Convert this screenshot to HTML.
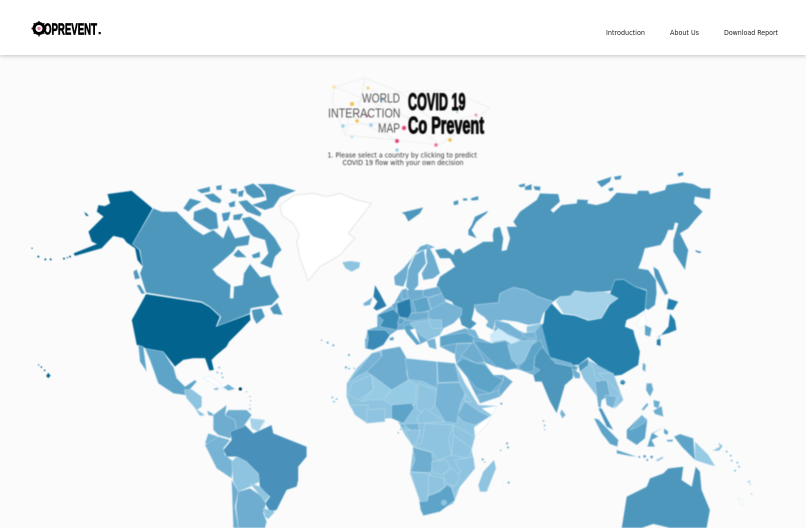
<!DOCTYPE html>
<html><head><meta charset="utf-8"><title>CoPrevent</title>
<style>
html,body{margin:0;padding:0;background:#fbfbfb}
body{width:806px;height:528px;overflow:hidden;position:relative;font-family:"DejaVu Sans",sans-serif}
.hd{position:absolute;left:0;top:0;width:806px;height:55px;background:#fff;box-shadow:0 1px 4px rgba(0,0,0,.22)}
svg{position:absolute;left:0;top:0}
.m polygon,.m path{stroke:#c9e2ef;stroke-linejoin:round}
.a{stroke-width:1.2}
</style></head><body>
<svg width="806" height="528" viewBox="0 0 806 528" style="filter:blur(.4px)">
<!-- Greenland -->
<g transform="translate(180 175) scale(.3333)"><polygon fill="#fff" stroke="#e4e6e7" stroke-width="3" stroke-linejoin="round" points="300,90 345,60 400,55 440,65 480,55 530,75 575,85 540,130 505,175 525,190 510,205 480,240 420,275 385,318 375,290 360,250 350,200 358,180 340,145 305,120"/>
<polygon fill="#8ec4e0" points="487,262 510,258 540,262 538,278 515,290 497,280"/></g>

<!-- North America -->
<g class="m a" transform="translate(20 170) scale(.3333)">
<g fill="#4d97bd" style="stroke:none">
<polygon fill="#4d97bd" points="400,115 425,125 470,125 520,175 550,195 580,180 610,205 625,165 645,205 690,195 685,225 650,230 640,245 600,280 578,298 590,315 632,345 630,385 640,385 642,350 668,345 672,310 690,282 722,322 750,315 755,340 778,380 755,405 720,410 692,415 690,430 590,470 603,440 570,410 545,395 378,368 360,310 368,290 360,240 337,222"/>
<polygon points="490,115 510,85 545,95 520,110 505,125"/>
<polygon points="522,125 560,112 590,130 595,175 570,180 545,165 520,150"/>
<polygon points="530,60 570,50 570,65 545,70"/>
<polygon points="552,75 580,70 605,90 600,100 575,95"/>
<polygon points="588,48 605,45 605,60 590,60"/>
<polygon points="628,58 650,55 652,72 635,70"/>
<polygon points="625,100 645,92 645,110 630,112"/>
<polygon points="605,130 632,125 625,150 610,155"/>
<polygon points="640,135 670,130 660,150 640,150"/>
<polygon points="655,95 680,90 725,130 720,140 680,125"/>
<polygon points="655,65 672,60 668,80 655,80"/>
<polygon points="672,50 700,40 725,60 735,80 700,85 680,70"/>
<polygon points="712,42 760,42 828,62 780,82 760,112 735,120 695,105 740,90 735,65"/>
<polygon points="665,145 690,140 730,165 765,205 785,240 765,260 755,295 720,280 745,250 735,210 700,200 690,190"/>
<polygon points="640,255 655,238 680,262 650,262"/>
<polygon points="695,255 720,245 720,262 700,265"/>
<polygon points="750,415 772,398 788,435 760,432"/>
<polygon points="695,420 725,415 735,440 710,462 700,445"/>
<polygon points="340,305 350,298 360,325 345,328"/>
<polygon points="350,345 360,345 375,370 365,372"/>
</g>
<polygon fill="#02638f" points="262,72 335,62 398,115 337,222 358,240 368,290 352,270 345,235 320,218 310,205 280,198 245,235 165,258 160,250 230,222 215,215 205,185 225,165 250,140 230,125 235,105 255,108 270,100"/>
<polygon fill="#02638f" points="378,372 545,398 570,412 600,440 588,470 690,432 692,450 665,478 628,515 620,530 590,555 575,570 582,600 568,602 555,565 520,565 490,570 465,590 430,545 385,538 350,525 335,450 360,405"/>
<g fill="#02638f" style="stroke:none">
<polygon points="192,125 200,130 207,138 198,138"/>
<circle cx="36" cy="235" r="2"/><circle cx="55" cy="260" r="3"/><circle cx="76" cy="268" r="3"/><circle cx="92" cy="268" r="3"/><circle cx="132" cy="266" r="3"/><circle cx="150" cy="260" r="3"/><circle cx="142" cy="263" r="2"/>
<circle cx="56" cy="585" r="2"/><circle cx="64" cy="591" r="2.5"/><circle cx="74" cy="601" r="2.5"/><polygon points="85,608 92,617 85,625 78,618"/>
</g>
</g>

<!-- Eurasia -->
<g class="m a" transform="translate(340 170) scale(.3333)">
<polygon fill="#4d97bd" points="290,345 300,320 345,290 330,265 300,265 285,240 315,235 340,255 345,240 360,235 370,250 405,230 430,215 460,215 458,195 462,175 480,170 490,205 485,243 500,240 510,205 500,170 530,170 520,155 540,125 590,90 600,70 655,72 660,95 632,120 640,128 665,105 710,100 712,88 745,90 742,100 770,105 805,95 830,68 890,72 895,62 925,62 930,72 975,60 980,45 1030,37 1060,42 1085,55 1112,55 1110,88 1065,80 1062,100 1088,125 1065,150 1045,175 1020,190 1045,240 1035,300 1000,245 1000,210 1015,160 1005,158 1000,180 985,180 975,205 962,225 915,235 905,270 895,295 925,300 948,330 950,370 945,405 925,420 915,415 920,360 885,350 850,328 825,330 820,362 790,365 745,368 705,362 690,378 660,380 640,395 590,378 560,360 520,352 480,370 475,398 405,405 400,430 395,450 410,460 390,478 365,465 358,440 365,420 345,410 335,395 310,385 295,365"/>
<g fill="#4d97bd">
<polygon points="445,122 440,130 410,155 395,180 410,205 385,195 385,180 395,165 405,140"/>
<polygon points="185,128 225,118 250,112 240,130 205,155 195,135"/>
<polygon points="535,45 555,40 555,50 540,52"/><polygon points="555,50 575,42 575,60 555,60"/><polygon points="580,48 602,50 600,62 585,60"/>
<polygon points="770,35 815,20 810,35 785,52"/><polygon points="822,20 845,16 842,28 825,30"/><polygon points="805,55 820,52 820,62 808,64"/><polygon points="1012,10 1030,6 1030,16 1015,20"/>
<polygon points="340,95 355,90 355,103 342,106"/><polygon points="368,85 382,85 382,92 370,92"/><polygon points="392,85 415,78 415,90 395,92"/>
<polygon points="940,290 955,300 985,370 975,375 945,320"/>
<polygon points="1065,240 1085,245 1080,250 1068,246"/>
</g>
<!-- Scandinavia -->
<polygon fill="#6eadd0" points="285,232 262,222 240,230 215,265 190,295 162,320 165,345 190,350 200,325 205,290 225,250 250,240"/>
<polygon fill="#6eadd0" points="252,240 258,280 235,310 235,345 215,368 198,350 205,300 225,255"/>
<polygon fill="#6eadd0" points="265,225 283,260 300,310 280,325 250,330 245,310 262,280 258,255 260,235"/>
<!-- Central asia -->
<polygon fill="#76b3d5" points="402,405 475,398 480,370 520,352 560,360 590,378 640,395 610,430 600,460 565,465 530,455 490,450 465,455 460,480 440,470 430,440 410,425"/>
<polygon fill="#a5d2e8" points="648,395 660,380 690,378 705,362 745,368 790,365 835,375 832,390 805,405 785,445 745,450 705,435 670,430"/>
<polygon fill="#2580ac" points="585,490 610,460 615,425 635,400 665,432 705,437 745,452 785,445 808,405 835,385 810,372 825,330 850,328 885,350 920,362 915,420 885,440 860,450 855,470 880,480 885,500 900,545 895,585 845,615 805,620 770,582 745,562 715,585 695,585 635,570 610,530"/>
<!-- Japan / Korea -->
<polygon fill="#fff" points="890,460 915,425 918,465 900,475"/>
<polygon fill="#5ea4c9" points="915,465 935,475 930,500 915,495"/>
<polygon fill="#2580ac" points="985,385 1015,395 1000,420 980,418"/>
<polygon fill="#2580ac" points="990,430 1005,450 1010,480 985,490 958,497 950,510 985,470"/>
<polygon fill="#2580ac" points="950,510 962,505 962,528 950,525"/>
<polygon fill="#5ea4c9" style="stroke:none" points="908,580 915,580 915,605 908,600"/>
<polygon fill="#6eadd0" points="920,640 935,640 935,660 920,660"/>
<circle cx="27" cy="555" r="2" fill="#76b3d5"/>
<circle cx="848" cy="637" r="7" fill="#2580ac"/>
</g>

<!-- Europe -->
<g class="m a" transform="translate(360 270) scale(.3333)">
<polygon fill="#6eadd0" style="stroke:none" points="15,235 22,180 52,170 52,135 100,105 125,60 190,60 235,50 258,95 305,115 305,135 280,160 250,175 240,195 205,210 182,222 165,175 112,180 90,195 70,225 40,240"/>
<polygon fill="#6eadd0" points="190,60 235,50 245,70 205,82 188,78"/>
<polygon fill="#76b3d5" points="205,85 245,70 258,95 215,122"/>
<polygon fill="#76b3d5" points="200,125 255,95 305,115 305,135 280,160 250,175 240,160 205,145"/>
<polygon fill="#5ea4c9" points="158,92 200,80 212,120 170,132"/>
<polygon fill="#6eadd0" points="95,105 115,92 108,125 98,118"/>
<polygon fill="#6eadd0" points="125,60 140,55 145,85 125,88"/>
<polygon fill="#6eadd0" points="150,130 205,125 205,145 170,152 130,150"/>
<polygon fill="#2a7dab" points="110,100 150,85 155,125 145,145 115,140"/>
<polygon fill="#3b8bb7" points="52,135 100,118 118,135 112,180 60,170 70,150"/>
<polygon fill="#5ea4c9" points="118,142 135,150 125,165 112,160"/>
<polygon fill="#5ea4c9" points="130,170 145,162 165,175 150,180 182,222 170,225 140,190"/>
<polygon fill="#8ec4e0" points="150,158 205,150 245,175 240,195 205,210 180,195"/>
<polygon fill="#8ec4e0" points="205,148 245,150 245,175 215,175"/>
<polygon fill="#3b8bb7" points="22,180 75,180 90,195 70,225 40,240 15,235 25,205"/>
<polygon fill="#76b3d5" points="15,205 25,205 20,235 15,235"/>
<polygon fill="#2a7dab" points="45,45 60,70 80,108 50,122 40,115 52,95 40,80"/>
<polygon fill="#76b3d5" points="10,100 38,82 30,105 12,108"/>
<polygon fill="#76b3d5" points="200,212 225,205 230,238 208,232"/>
<polygon fill="#5ea4c9" points="88,205 100,200 102,210 90,212"/>
</g>

<!-- Americas south -->
<g class="m a" transform="translate(130 340) scale(.3333)">
<polygon fill="#5ea4c9" points="45,25 100,35 125,75 130,80 140,115 165,140 195,120 200,125 165,165 130,160 85,130 60,60"/>
<polygon fill="#5ea4c9" points="25,15 40,20 50,95 30,65"/>
<polygon fill="#8ec4e0" points="162,150 185,148 215,170 215,200 200,210 170,175"/>
<polygon fill="#8ec4e0" points="195,205 225,225 210,228"/>
<polygon fill="#6eadd0" points="232,212 250,222 248,228 235,225"/>
<polygon fill="#6eadd0" points="250,225 290,195 285,225 315,240 320,270 300,295 265,285 250,270"/>
<polygon fill="#6eadd0" points="295,210 350,210 365,225 340,260 320,270 315,240 285,225"/>
<polygon fill="#a5d2e8" points="360,235 405,240 385,275 365,265"/>
<polygon fill="#fff" points="405,245 420,255 410,268 400,265"/>
<polygon fill="#76b3d5" points="225,310 235,280 265,290 250,315"/>
<polygon fill="#76b3d5" points="225,315 265,290 300,300 280,325 285,345 310,365 305,415 260,385"/>
<polygon fill="#4991bb" points="280,330 305,300 300,275 340,260 345,255 370,280 425,255 430,280 530,320 530,350 505,380 505,420 500,440 470,450 440,510 420,515 405,490 420,470 390,445 385,400 350,365 320,350 290,350"/>
<polygon fill="#8ec4e0" points="305,365 320,350 350,365 385,400 388,425 360,440 325,455 310,425"/>
<polygon fill="#8ec4e0" points="360,430 390,440 418,470 405,485 385,460"/>
<polygon fill="#6eadd0" points="325,455 360,445 390,465 408,490 400,520 410,545 405,564 325,564 318,500"/>
<polygon fill="#6eadd0" points="305,420 325,455 315,500 325,564 310,564"/>
<polygon fill="#8ec4e0" points="400,505 435,515 415,537 405,530"/>
<polygon fill="#fff" points="218,115 240,108 270,130 280,148 255,135 235,122"/>
<polygon fill="#76b3d5" points="280,142 295,133 315,147 295,152"/>
<polygon fill="#8ec4e0" points="252,145 265,143 265,150 252,150"/>
<circle cx="331" cy="147" r="5" fill="#02405f"/>
<g fill="#8ec4e0"><circle cx="268" cy="83" r="3"/><circle cx="262" cy="97" r="3"/><circle cx="275" cy="100" r="3"/><circle cx="278" cy="112" r="3"/><circle cx="350" cy="155" r="2"/><circle cx="360" cy="170" r="2"/><circle cx="362" cy="182" r="2"/><circle cx="360" cy="195" r="2"/><circle cx="360" cy="207" r="3"/><circle cx="607" cy="172" r="3"/><circle cx="620" cy="177" r="3"/><circle cx="612" cy="185" r="3"/></g>
<g fill="#5ea4c9"><circle cx="575" cy="1" r="2"/><circle cx="593" cy="8" r="3"/><circle cx="610" cy="16" r="3"/><circle cx="657" cy="45" r="3"/><circle cx="648" cy="82" r="3"/><circle cx="657" cy="86" r="2"/></g>
</g>

<!-- Africa -->
<g class="m a" transform="translate(340 340) scale(.3333)">
<polygon fill="#8ec4e0" points="20,130 50,85 95,40 125,30 180,20 200,55 290,65 345,70 375,130 415,195 470,198 440,255 405,290 395,330 405,385 360,440 340,490 290,515 250,525 240,485 210,400 220,320 195,285 170,235 140,235 80,250 30,200 20,170"/>
<polygon fill="#76b3d5" points="20,130 60,85 95,40 120,35 125,50 80,95 50,110"/>
<polygon fill="#6eadd0" points="80,95 125,50 125,30 180,20 200,55 200,100 205,120 155,150 95,105"/>
<polygon fill="#76b3d5" points="195,55 290,65 292,145 250,125 205,118"/>
<polygon fill="#6eadd0" points="292,65 345,70 358,125 295,128"/>
<polygon fill="#76b3d5" points="292,130 358,128 375,160 360,195 350,250 315,245 285,195"/>
<polygon fill="#8ec4e0" points="25,165 35,130 95,105 100,150 55,180"/>
<polygon fill="#96cbe5" points="95,105 155,150 125,180 85,180 60,185 100,150"/>
<polygon fill="#96cbe5" points="155,150 205,120 230,135 225,195 155,195 130,180"/>
<polygon fill="#8ec4e0" points="235,130 290,150 285,195 255,225 230,205"/>
<polygon fill="#5ea4c9" points="155,195 215,190 222,205 190,250 155,235"/>
<polygon fill="#8ec4e0" points="30,195 85,195 82,250 45,225"/>
<polygon fill="#8ec4e0" points="80,210 135,205 135,245 80,250"/>
<polygon fill="#8ec4e0" points="230,235 255,205 315,245 235,250"/>
<polygon fill="#8ec4e0" points="375,160 395,185 375,185"/>
<polygon fill="#76b3d5" points="375,185 418,215 450,230 405,255 370,245 352,225"/>
<polygon fill="#fff" points="425,205 470,198 440,255 405,290 402,262 455,225"/>
<polygon fill="#76b3d5" points="190,252 235,250 240,290 205,265"/>
<polygon fill="#8ec4e0" points="195,270 240,270 230,310 215,315"/>
<polygon fill="#8ec4e0" points="255,250 340,255 325,300 335,345 295,360 275,335 220,320 245,310"/>
<polygon fill="#8ec4e0" points="340,255 405,290 395,325 340,285"/>
<polygon fill="#8ec4e0" points="340,285 395,325 385,355 335,345"/>
<polygon fill="#6eadd0" points="218,322 275,338 280,375 272,398 212,395 225,360"/>
<polygon fill="#8ec4e0" points="275,365 320,360 330,385 305,405 275,395"/>
<polygon fill="#8ec4e0" points="345,360 400,350 405,385 360,440 340,470 335,410 365,395 352,380"/>
<polygon fill="#8ec4e0" points="212,397 270,400 262,485 240,485"/>
<polygon fill="#8ec4e0" points="265,405 310,415 315,440 265,470"/>
<polygon fill="#8ec4e0" points="310,405 335,385 360,410 345,440 320,430"/>
<polygon fill="#5ea4c9" points="238,485 262,483 265,468 300,455 322,435 335,445 345,480 300,515 250,527 242,510"/>
<circle cx="312" cy="488" r="9" fill="#8ec4e0"/>
<polygon fill="#8ec4e0" points="462,360 468,385 440,455 420,455 415,435 430,395"/>
<g fill="#5ea4c9"><circle cx="18" cy="82" r="3"/><circle cx="28" cy="86" r="2"/><circle cx="42" cy="85" r="2"/><circle cx="27" cy="45" r="2"/><circle cx="188" cy="258" r="3"/><circle cx="182" cy="268" r="2"/><circle cx="175" cy="278" r="2"/><circle cx="501" cy="310" r="3"/><circle cx="504" cy="322" r="3"/><circle cx="482" cy="331" r="2"/><circle cx="428" cy="358" r="3"/><circle cx="434" cy="366" r="2"/><circle cx="506" cy="428" r="3"/><circle cx="484" cy="191" r="3"/></g>
<circle cx="491" cy="433" r="3" fill="#eef3f5"/>
</g>

<!-- SE Asia + Oceania -->
<g class="m a" transform="translate(530 340) scale(.3333)">
<polygon fill="#8ec4e0" style="stroke:none" points="150,90 175,60 250,100 280,180 255,205 240,165 215,180 205,200 205,175 190,155 160,115"/>
<polygon fill="#8ec4e0" points="150,90 175,60 190,85 195,110 210,125 205,175 190,155 160,115"/>
<polygon fill="#6eadd0" points="195,125 230,120 240,165 215,180 212,205 205,200"/>
<polygon fill="#8ec4e0" points="205,100 250,100 280,180 255,205 270,160 240,130"/>
<polygon fill="#76b3d5" points="225,165 260,170 250,205 230,195"/>
<polygon fill="#4d97bd" points="205,205 215,205 250,270 230,260"/>
<polygon fill="#5ea4c9" points="192,235 205,238 265,300 262,320 240,312 215,280"/>
<polygon fill="#5ea4c9" points="290,270 335,225 352,240 345,295 320,315 290,295"/>
<polygon fill="#76b3d5" points="300,270 335,225 352,240 340,250 320,262"/>
<polygon fill="#5ea4c9" points="260,330 320,350 300,348 260,340"/>
<polygon fill="#5ea4c9" points="352,320 365,280 395,265 370,280 385,290 365,300 375,320"/>
<polygon fill="#5ea4c9" points="432,290 450,282 490,295 495,360 455,320"/>
<polygon fill="#96cbe5" points="495,305 535,345 555,378 540,375 495,360"/>
<polygon fill="#8ec4e0" points="548,332 570,320 565,308 578,318 568,332"/>
<polygon fill="#4d97bd" points="275,564 290,470 350,440 360,415 400,400 415,385 460,380 455,420 485,440 497,380 510,395 515,450 540,510 530,564 420,564 370,552 335,564"/>
<polygon fill="#76b3d5" points="95,208 107,225 97,235 90,220"/>
<polygon fill="#6eadd0" points="350,130 365,130 370,150 360,170 348,150"/>
<polygon fill="#6eadd0" points="370,180 390,185 385,205 372,200"/>
<polygon fill="#6eadd0" points="370,212 395,198 400,230 375,222"/>
<polygon fill="#6eadd0" points="335,208 352,188 355,195 340,212"/>
<polygon fill="#5ea4c9" points="402,265 415,275 412,285 402,280"/>
<polygon fill="#6eadd0" points="410,300 428,298 428,305 412,305"/>
<polygon fill="#2580ac" points="272,124 288,126 280,135 270,130"/>
<polygon fill="#6eadd0" points="340,72 347,74 346,96 337,85"/>
<g fill="#5ea4c9"><circle cx="328" cy="351" r="3"/><circle cx="344" cy="349" r="4"/><circle cx="352" cy="360" r="3"/><circle cx="365" cy="351" r="4"/></g>
<polygon fill="#8ec4e0" points="378,360 398,350 400,354 382,364"/>
<g fill="#8ec4e0"><circle cx="40" cy="243" r="3"/><circle cx="44" cy="256" r="3"/><circle cx="44" cy="269" r="2"/><circle cx="590" cy="335" r="3"/><circle cx="602" cy="347" r="3"/><circle cx="605" cy="362" r="3"/><circle cx="622" cy="368" r="3"/><circle cx="627" cy="380" r="3"/><circle cx="615" cy="392" r="3"/><circle cx="657" cy="425" r="3"/><circle cx="661" cy="432" r="2"/><circle cx="665" cy="462" r="2"/></g>
<polygon fill="#fff" points="622,474 628,474 642,490 636,497"/>
</g>

<!-- Middle East & South Asia -->
<g class="m a" transform="translate(440 310) scale(.3333)">
<polygon fill="#6eadd0" style="stroke:none" points="0,80 75,55 118,85 155,97 165,50 205,45 255,70 305,42 330,140 415,170 398,205 375,225 350,310 305,215 280,195 235,178 170,172 135,158 50,135 0,110"/>
<polygon fill="#6eadd0" style="stroke:none" points="50,135 135,160 160,195 190,195 218,215 180,260 120,280 80,200 50,165"/>
<polygon fill="#fbfbfb" style="stroke:none" points="112,30 130,18 145,35 130,55 158,70 160,100 135,92 128,70 118,50"/>
<polygon fill="#5ea4c9" points="0,80 20,75 75,68 100,80 100,98 50,100 0,110"/>
<polygon fill="#76b3d5" points="75,55 105,60 118,85 100,80"/>
<polygon fill="#5ea4c9" points="100,92 130,95 155,100 200,92 210,130 235,175 200,180 170,170 150,150 115,115"/>
<polygon fill="#6eadd0" points="60,105 100,98 112,115 135,155 110,160 70,140 50,135"/>
<polygon fill="#76b3d5" points="50,102 95,100 65,135 50,165 45,140"/>
<polygon fill="#5ea4c9" points="50,160 70,145 110,160 135,165 160,195 190,210 150,250 110,235 80,200"/>
<polygon fill="#76b3d5" points="112,255 150,250 175,240 180,260 120,280"/>
<polygon fill="#6eadd0" points="190,195 218,215 200,235 180,260 175,240 190,210"/>
<polygon fill="#76b3d5" points="165,30 205,40 255,75 240,90 205,72 175,55 165,50"/>
<polygon fill="#cdeafa" points="150,75 175,55 205,75 240,90 225,110 195,90 155,97"/>
<polygon fill="#8ec4e0" points="260,50 305,40 285,65 260,65"/>
<polygon fill="#76b3d5" points="245,70 285,65 290,85 260,85"/>
<polygon fill="#8ec4e0" points="210,130 205,105 240,92 290,90 275,105 255,150 235,165 215,150"/>
<polygon fill="#5ea4c9" points="235,175 255,150 275,105 300,90 310,110 285,140 280,185 255,185"/>
<polygon fill="#4d97bd" points="280,195 300,180 282,170 285,140 305,110 330,140 335,150 395,170 415,170 400,180 398,205 375,225 350,310 330,275 305,215 285,215"/>
<polygon fill="#76b3d5" points="340,145 395,160 395,170 345,160"/>
<polygon fill="#4d97bd" points="415,165 445,145 445,165 420,185"/>
<polygon fill="#6eadd0" points="395,175 420,190 420,205 405,205"/>
</g>

<!-- title graphic lines -->
<g stroke="#e9eaeb" stroke-width=".6" fill="none">
<path d="M335 87 L365 78 L400 92 L450 90 L490 108 L440 145 L397 140 L345 135 L332 100Z"/>
<path d="M352 103 L400 92 L356 120 L397 140 L345 135 L352 103 M365 78 L356 120 M400 92 L437 124 L476 115 M370 88 L440 145 M335 87 L410 118 M340 125 L397 122"/>
</g>
<g>
<circle cx="334" cy="87" r="1.8" fill="#f7e3a8"/><circle cx="368" cy="88" r="1.5" fill="#f3d37a"/><circle cx="352" cy="104" r="2" fill="#f2c14e"/><circle cx="382" cy="100" r="1.8" fill="#9cd0ea"/><circle cx="357" cy="121" r="1.7" fill="#f2c14e"/><circle cx="343" cy="126" r="1.8" fill="#9cd0ea"/><circle cx="371" cy="125" r="1.8" fill="#9cd0ea"/><circle cx="352" cy="137" r="1.3" fill="#bcdff1"/><circle cx="367" cy="116" r="1.4" fill="#e7799b"/><circle cx="404" cy="128" r="2.2" fill="#e24d7d"/><circle cx="397" cy="141" r="2" fill="#e24d7d"/><circle cx="397" cy="150" r="1.7" fill="#9cd0ea"/><circle cx="436" cy="145" r="1.8" fill="#e7799b"/><circle cx="450" cy="140" r="1.8" fill="#f2c14e"/><circle cx="476" cy="115" r="1.5" fill="#eb9ab5"/><circle cx="457" cy="112" r="1.2" fill="#9cd0ea"/>
</g>
<g font-family="'Liberation Sans',sans-serif" fill="#555" font-size="12.5">
<text x="362" y="102.5" textLength="38" lengthAdjust="spacingAndGlyphs">WORLD</text>
<text x="328" y="117.5" textLength="72.5" lengthAdjust="spacingAndGlyphs">INTERACTION</text>
<text x="378" y="132.5" textLength="22" lengthAdjust="spacingAndGlyphs">MAP</text>
</g>
<g font-family="'Liberation Sans',sans-serif" font-weight="bold" fill="#0a0a0a" stroke="#0a0a0a" stroke-width="1.1">
<text x="408" y="110" font-size="24" textLength="57.5" lengthAdjust="spacingAndGlyphs">COVID 19</text>
<text x="408" y="133.5" font-size="24" textLength="76" lengthAdjust="spacingAndGlyphs">Co Prevent</text>
</g>
<g font-family="'DejaVu Sans',sans-serif" fill="#333" font-size="6.6">
<text x="327.5" y="157.5" textLength="149.5" lengthAdjust="spacingAndGlyphs">1. Please select a country by clicking to predict</text>
<text x="342.5" y="165" textLength="121" lengthAdjust="spacingAndGlyphs">COVID 19 flow with your own decision</text>
</g>
</svg>

<div class="hd"></div>
<svg width="806" height="55" viewBox="0 0 806 55">
<g stroke="#111" stroke-width="1.4"><path d="M39 21V36.5M31.5 28.5H46.5M33.7 23.2L44.3 33.8M44.3 23.2L33.7 33.8"/></g>
<circle cx="39" cy="28.5" r="5" fill="#fff" stroke="#000" stroke-width="3"/>
<circle cx="39" cy="28.5" r="1.7" fill="#e7799b"/>
<text x="44" y="34.3" font-family="'Liberation Sans',sans-serif" font-weight="bold" font-size="16" fill="#000" stroke="#000" stroke-width=".7" textLength="53" lengthAdjust="spacingAndGlyphs">OPREVENT</text>
<rect x="98.6" y="32" width="2.2" height="2.2" fill="#111"/>
<g font-family="'DejaVu Sans',sans-serif" font-size="6.6" fill="#222">
<text x="606" y="35" textLength="39" lengthAdjust="spacingAndGlyphs">Introduction</text>
<text x="670" y="35" textLength="29" lengthAdjust="spacingAndGlyphs">About Us</text>
<text x="724" y="35" textLength="54" lengthAdjust="spacingAndGlyphs">Download Report</text>
</g>
</svg>
</body></html>
